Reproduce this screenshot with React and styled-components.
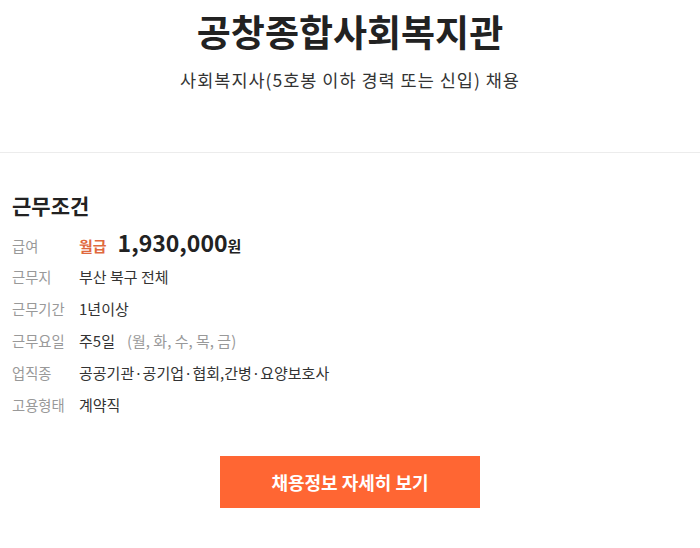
import styled, { createGlobalStyle } from 'styled-components';

const GlobalStyle = createGlobalStyle`
    body {
        margin: 0;
        background: #fff;
        font-family: "Noto Sans CJK KR", "Noto Sans", sans-serif;
        color: #222;
    }
`;

const Page = styled.div`
    width: 700px;
`;

const Header = styled.header`
    display: flex;
    flex-direction: column;
    align-items: center;
    padding: 7px 0 59px;
    border-bottom: 1px solid #ececec;
`;

const Title = styled.h1`
    margin: 0;
    font-size: 37px;
    line-height: 48px;
    font-weight: 700;
    color: #222;
`;

const Subtitle = styled.p`
    margin: 12px 0 0;
    font-size: 17.5px;
    line-height: 26px;
    letter-spacing: 1px;
    color: #333;
`;

const Section = styled.section`
    padding: 37px 12px 0;
`;

const SectionTitle = styled.h2`
    margin: 0 0 6px;
    font-size: 21px;
    line-height: 30px;
    font-weight: 700;
    color: #222;
`;

const Row = styled.div`
    display: flex;
    align-items: baseline;
    height: ${(p) => (p.$tall ? '35px' : '32px')};
    line-height: 32px;
`;

const Label = styled.span`
    width: 67px;
    flex-shrink: 0;
    font-size: 14.3px;
    color: #999;
`;

const Value = styled.span`
    font-size: 15px;
    color: #333;
`;

const PayType = styled.span`
    font-size: 15px;
    font-weight: 700;
    color: #e0693e;
    margin-right: 11px;
`;

const Amount = styled.span`
    font-size: 23px;
    font-weight: 700;
    color: #222;
`;

const Unit = styled.span`
    font-size: 15px;
    font-weight: 700;
    color: #222;
`;

const Muted = styled.span`
    margin-left: 12px;
    font-size: 15px;
    color: #999;
`;

const Actions = styled.div`
    display: flex;
    justify-content: center;
    padding-top: 35px;
`;

const Button = styled.button`
    width: 260px;
    height: 52px;
    border: 0;
    background: #ff6633;
    color: #fff;
    font-family: inherit;
    font-size: 18px;
    font-weight: 700;
    cursor: pointer;
`;

const rows = [
    { label: '근무지', value: '부산 북구 전체' },
    { label: '근무기간', value: '1년이상' },
    { label: '근무요일', value: '주5일', extra: '(월, 화, 수, 목, 금)' },
    { label: '업직종', value: '공공기관·공기업·협회,간병·요양보호사' },
    { label: '고용형태', value: '계약직' },
];

export default function App() {
    return (
        <Page>
            <GlobalStyle />
            <Header>
                <Title>공창종합사회복지관</Title>
                <Subtitle>사회복지사(5호봉 이하 경력 또는 신입) 채용</Subtitle>
            </Header>
            <Section>
                <SectionTitle>근무조건</SectionTitle>
                <Row $tall>
                    <Label>급여</Label>
                    <PayType>월급</PayType>
                    <Amount>1,930,000</Amount>
                    <Unit>원</Unit>
                </Row>
                {rows.map((r) => (
                    <Row key={r.label}>
                        <Label>{r.label}</Label>
                        <Value>{r.value}</Value>
                        {r.extra && <Muted>{r.extra}</Muted>}
                    </Row>
                ))}
            </Section>
            <Actions>
                <Button>채용정보 자세히 보기</Button>
            </Actions>
        </Page>
    );
}
